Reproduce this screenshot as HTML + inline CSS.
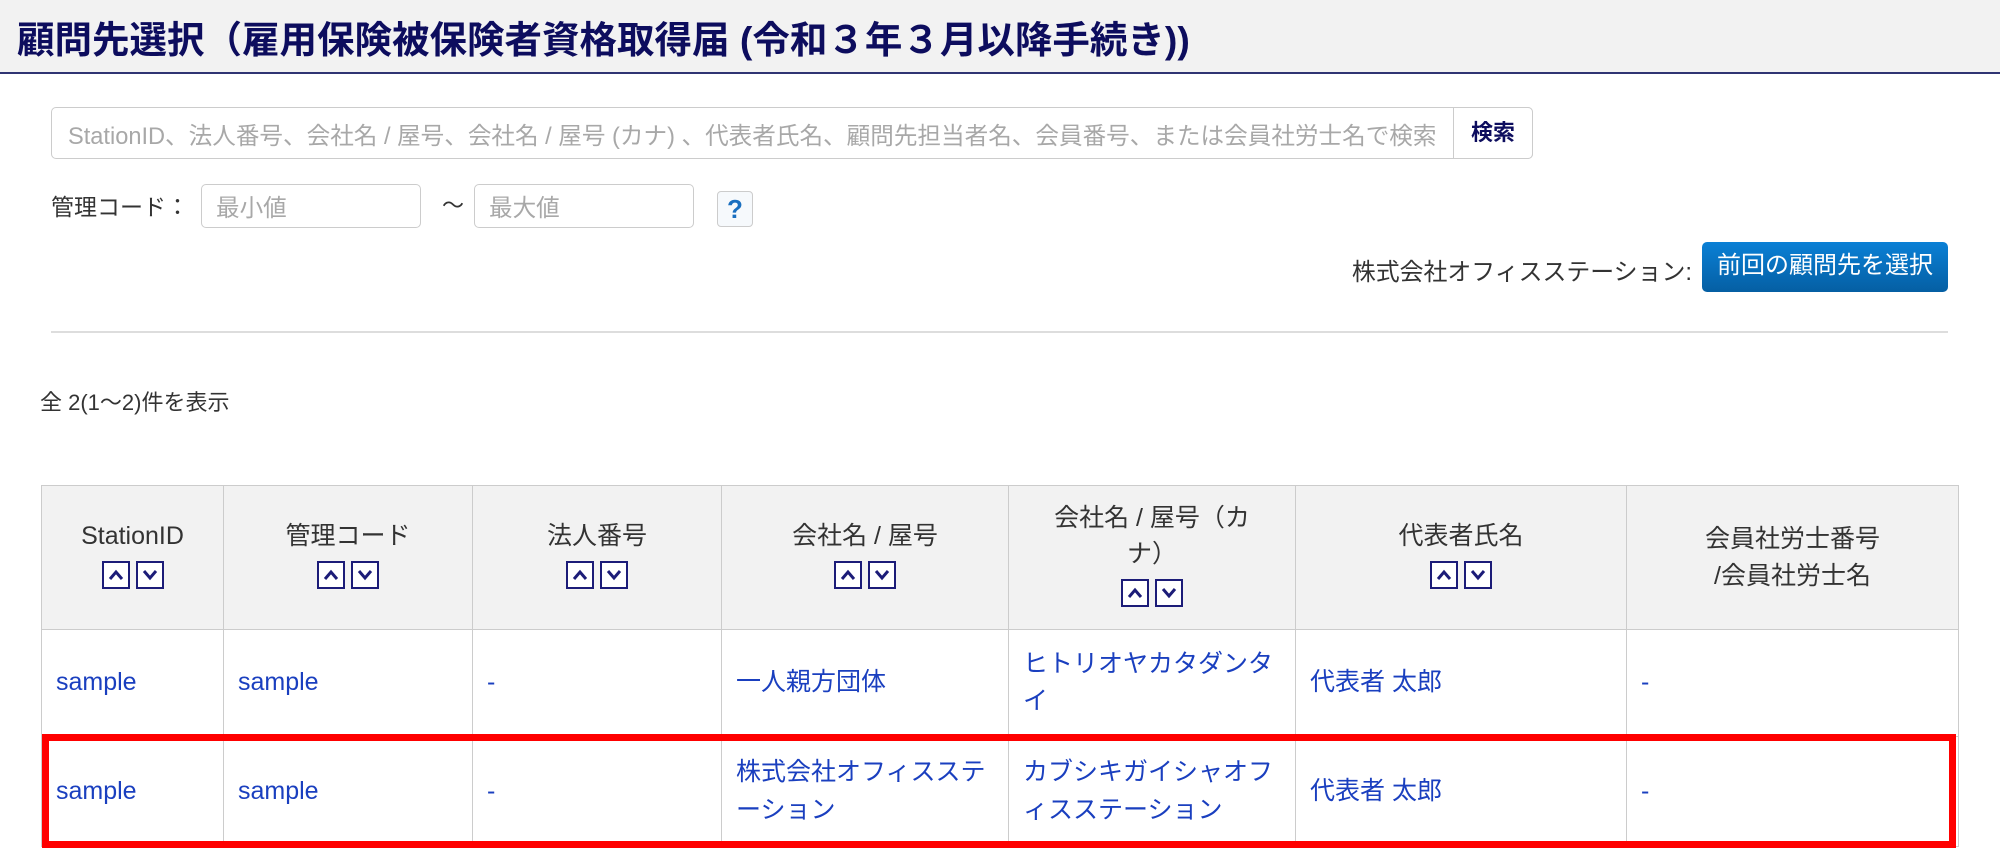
<!DOCTYPE html>
<html><head><meta charset="utf-8">
<style>
*{box-sizing:border-box;margin:0;padding:0}
body{width:2000px;height:855px;overflow:hidden;background:#fff;font-family:"Liberation Sans","Noto Sans CJK JP",sans-serif;color:#333;position:relative}
.hdr{position:absolute;left:0;top:0;width:2000px;height:74px;background:#f2f2f2;border-bottom:2px solid #2f3473}
.hdr h1{position:absolute;left:17px;top:9px;font-size:37.5px;font-weight:bold;color:#0d0d5e;white-space:nowrap}
.abs{position:absolute}
.inp{border:1px solid #ccc;border-radius:5px;background:#fff;color:#a8a8a8;font-size:23.6px;white-space:nowrap;overflow:hidden}
table{position:absolute;left:41px;top:485px;border-collapse:collapse;table-layout:fixed;width:1917px;font-size:25px}
th{background:#f2f2f2;font-weight:normal;color:#333;border:1px solid #ccc;height:144px;text-align:center;vertical-align:middle;line-height:1.45}
td{border:1px solid #ccc;padding:0 14px;vertical-align:middle;color:#1a3fbf;line-height:1.5}
.s{display:inline-block;margin-top:6px}
.s span{display:inline-block;width:28px;height:28px;border:2px solid #1c1c78;background:#fff;margin:0 3px;position:relative;vertical-align:top}
.s span svg{position:absolute;left:4px;top:5px}
</style></head><body>
<div class="hdr"><h1>顧問先選択（雇用保険被保険者資格取得届 (令和３年３月以降手続き))</h1></div>

<div class="abs inp" style="left:51px;top:107px;width:1482px;height:52px;padding:9px 16px 0 16px">StationID、法人番号、会社名 / 屋号、会社名 / 屋号 (カナ) 、代表者氏名、顧問先担当者名、会員番号、または会員社労士名で検索</div>
<div class="abs" style="left:1453px;top:107px;width:80px;height:52px;border:1px solid #ccc;border-radius:0 5px 5px 0;background:#fff;font-weight:bold;color:#0d0d5e;font-size:22px;text-align:center;line-height:50px">検索</div>

<div class="abs" style="left:51px;top:188px;font-size:23px;color:#333">管理コード：</div>
<div class="abs inp" style="left:201px;top:184px;width:220px;height:44px;padding:4px 14px 0">最小値</div>
<div class="abs" style="left:442px;top:188px;font-size:22px;color:#333">～</div>
<div class="abs inp" style="left:474px;top:184px;width:220px;height:44px;padding:4px 14px 0">最大値</div>
<div class="abs" style="left:717px;top:191px;width:36px;height:36px;border:1px solid #ccc;border-radius:4px;background:#f6f9fc;color:#1a6fc0;font-weight:bold;font-size:26px;text-align:center;line-height:34px">?</div>

<div class="abs" style="left:1200px;top:252px;width:492px;text-align:right;font-size:23.9px;color:#333;white-space:nowrap">株式会社オフィスステーション:</div>
<div class="abs" style="left:1702px;top:242px;width:246px;height:50px;border-radius:5px;background:linear-gradient(#0a80d6,#055fa3);color:#fff;font-size:24px;text-align:center;line-height:48px">前回の顧問先を選択</div>

<div class="abs" style="left:51px;top:331px;width:1897px;height:2px;background:#ddd"></div>
<div class="abs" style="left:40px;top:385px;font-size:22px;color:#333">全 2(1～2)件を表示</div>

<table>
<colgroup><col style="width:182px"><col style="width:249px"><col style="width:249px"><col style="width:287px"><col style="width:287px"><col style="width:331px"><col style="width:332px"></colgroup>
<tr>
<th>StationID<br><span class="s"><span><svg width="16" height="14"><path d="M2 11 L8 4 L14 11" stroke="#1c1c78" stroke-width="3" fill="none"/></svg></span><span><svg width="16" height="14"><path d="M2 3 L8 10 L14 3" stroke="#1c1c78" stroke-width="3" fill="none"/></svg></span></span></th>
<th>管理コード<br><span class="s"><span><svg width="16" height="14"><path d="M2 11 L8 4 L14 11" stroke="#1c1c78" stroke-width="3" fill="none"/></svg></span><span><svg width="16" height="14"><path d="M2 3 L8 10 L14 3" stroke="#1c1c78" stroke-width="3" fill="none"/></svg></span></span></th>
<th>法人番号<br><span class="s"><span><svg width="16" height="14"><path d="M2 11 L8 4 L14 11" stroke="#1c1c78" stroke-width="3" fill="none"/></svg></span><span><svg width="16" height="14"><path d="M2 3 L8 10 L14 3" stroke="#1c1c78" stroke-width="3" fill="none"/></svg></span></span></th>
<th>会社名 / 屋号<br><span class="s"><span><svg width="16" height="14"><path d="M2 11 L8 4 L14 11" stroke="#1c1c78" stroke-width="3" fill="none"/></svg></span><span><svg width="16" height="14"><path d="M2 3 L8 10 L14 3" stroke="#1c1c78" stroke-width="3" fill="none"/></svg></span></span></th>
<th style="padding:0 30px">会社名 / 屋号（カナ）<br><span class="s"><span><svg width="16" height="14"><path d="M2 11 L8 4 L14 11" stroke="#1c1c78" stroke-width="3" fill="none"/></svg></span><span><svg width="16" height="14"><path d="M2 3 L8 10 L14 3" stroke="#1c1c78" stroke-width="3" fill="none"/></svg></span></span></th>
<th>代表者氏名<br><span class="s"><span><svg width="16" height="14"><path d="M2 11 L8 4 L14 11" stroke="#1c1c78" stroke-width="3" fill="none"/></svg></span><span><svg width="16" height="14"><path d="M2 3 L8 10 L14 3" stroke="#1c1c78" stroke-width="3" fill="none"/></svg></span></span></th>
<th>会員社労士番号<br>/会員社労士名</th>
</tr>
<tr style="height:107px">
<td>sample</td><td>sample</td><td>-</td><td>一人親方団体</td><td>ヒトリオヤカタダンタイ</td><td>代表者 太郎</td><td>-</td>
</tr>
<tr style="height:110px">
<td>sample</td><td>sample</td><td>-</td><td>株式会社オフィスステーション</td><td>カブシキガイシャオフィスステーション</td><td>代表者 太郎</td><td>-</td>
</tr>
</table>
<div class="abs" style="left:42px;top:734px;width:1914px;height:114px;border:7px solid #ff0000"></div>
</body></html>
